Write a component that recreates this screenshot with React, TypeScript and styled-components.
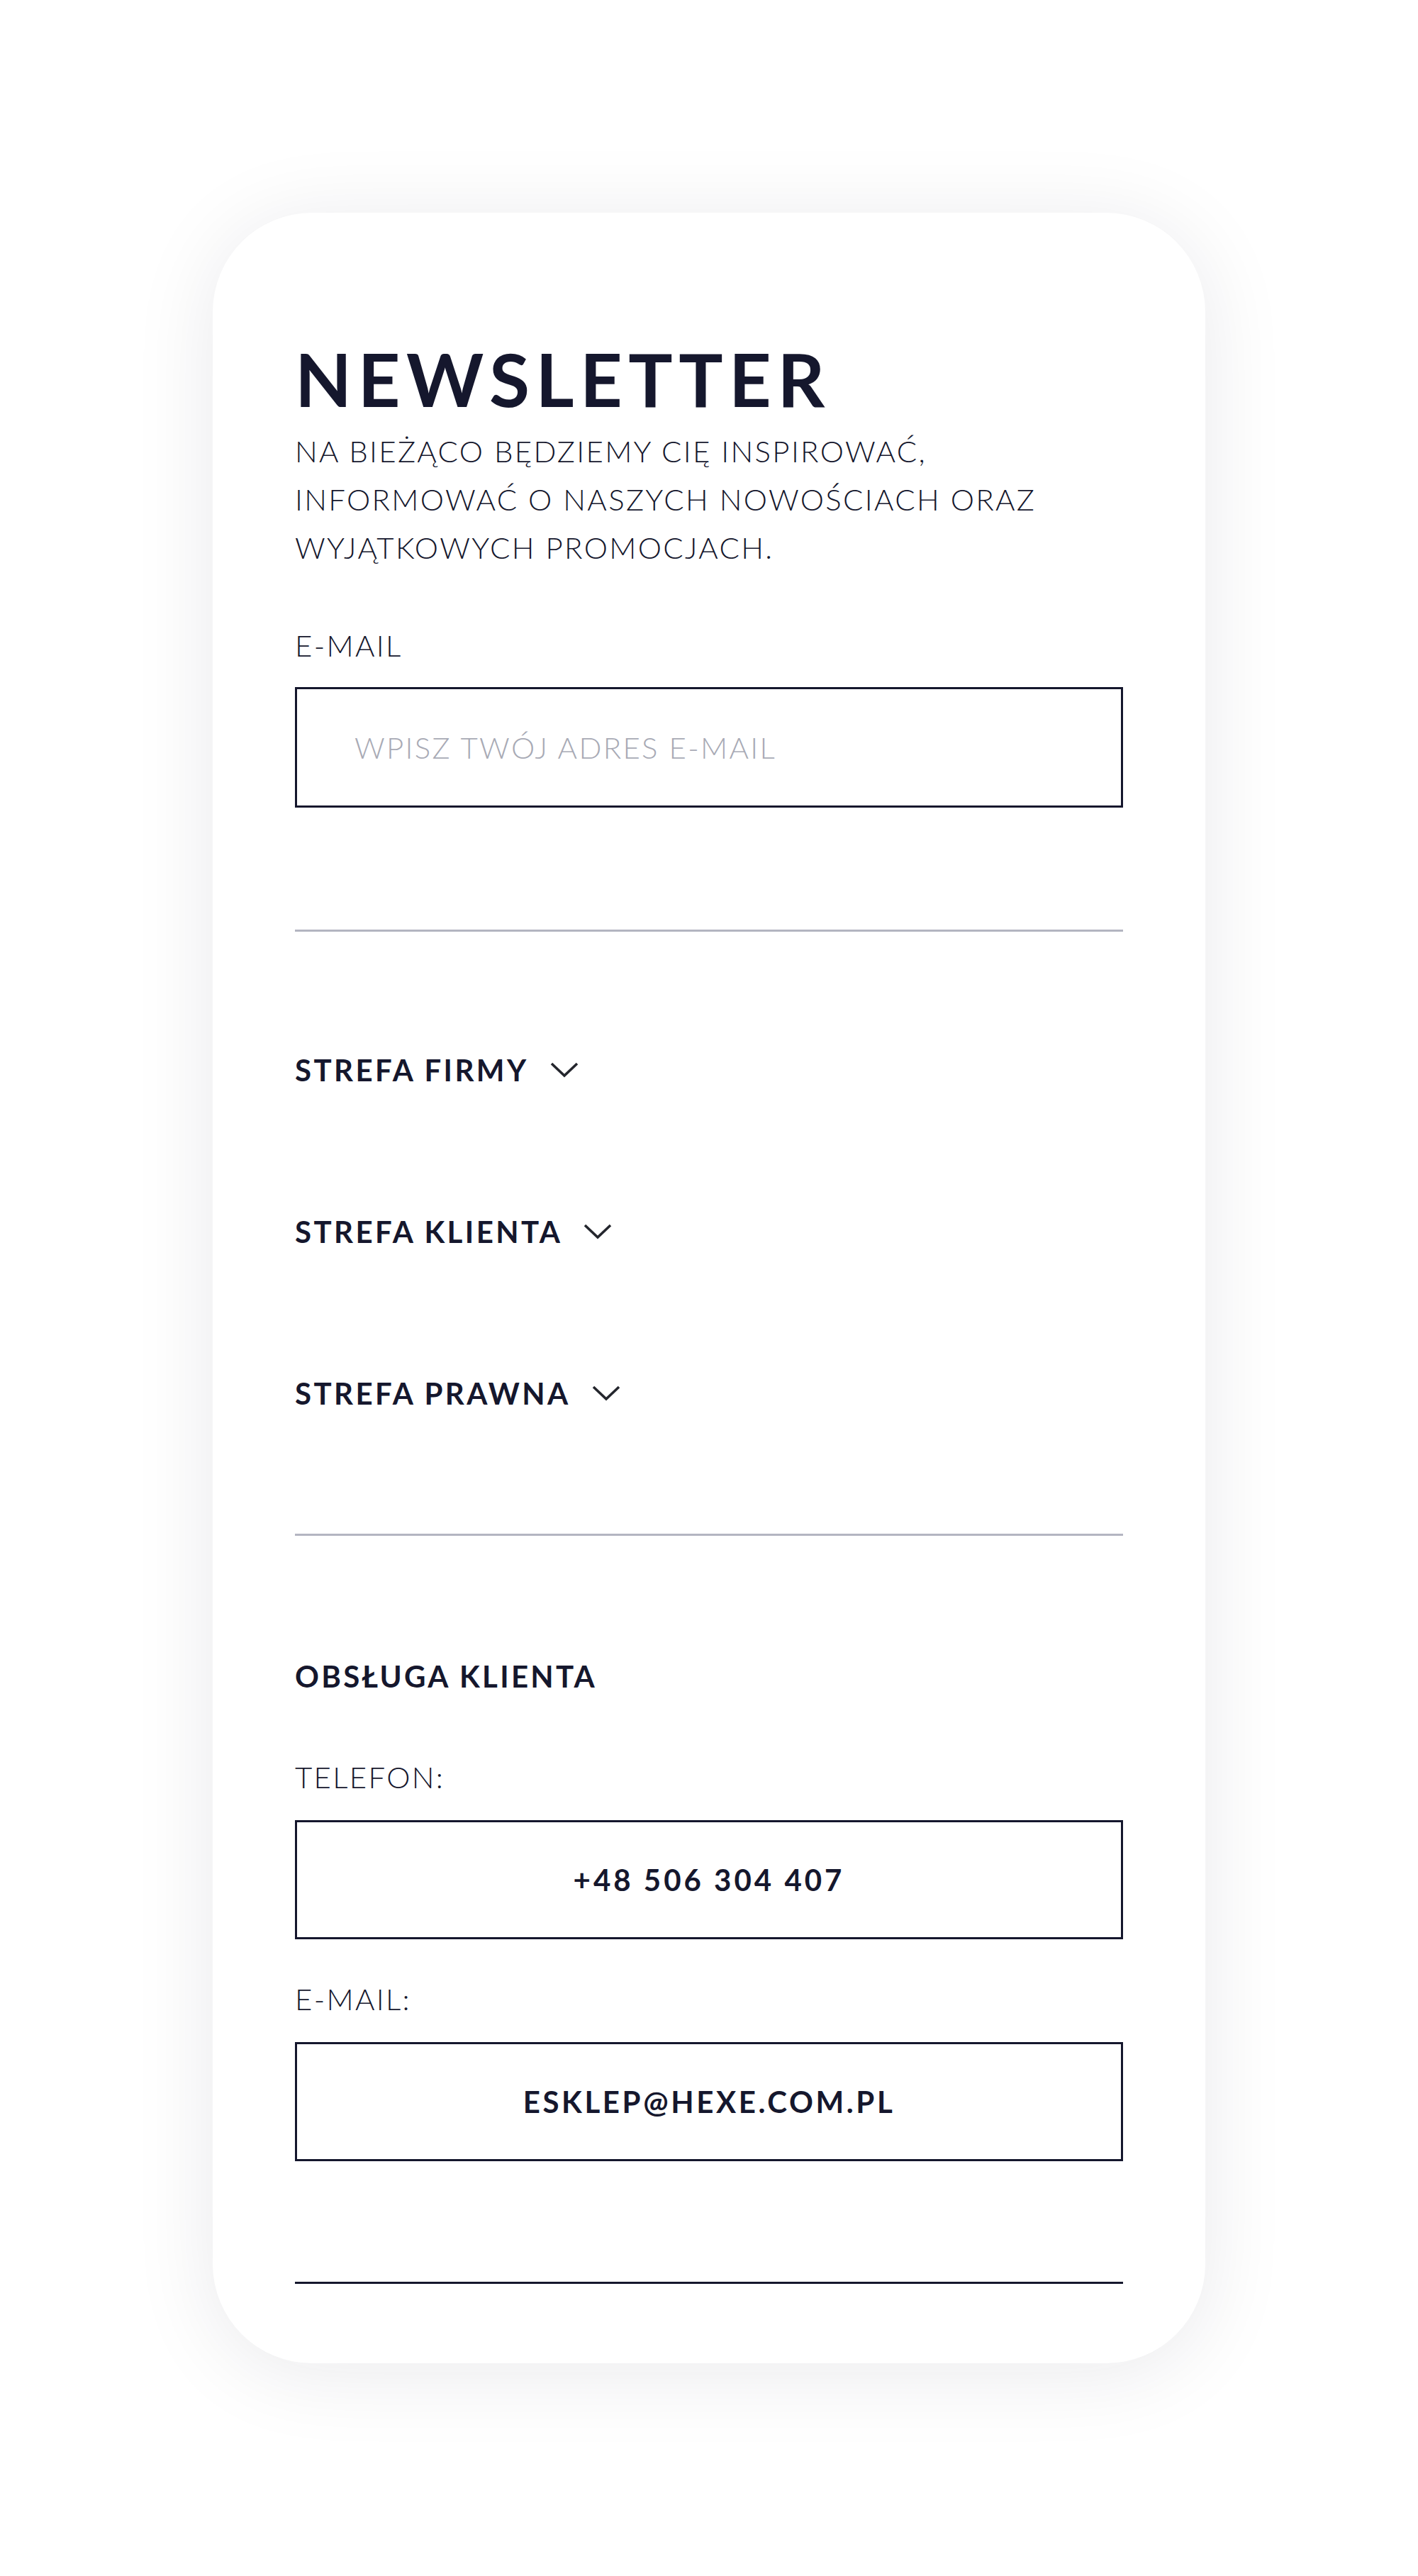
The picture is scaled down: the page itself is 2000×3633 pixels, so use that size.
import React from 'react';
import styled, { createGlobalStyle } from 'styled-components';

const ink = '#15172d';
const font = 'Lato, "Noto Sans", Arial, sans-serif';

const GlobalStyle = createGlobalStyle`
  html, body {
    margin: 0;
    padding: 0;
    background: #ffffff;
  }
  body {
    font-family: ${font};
    color: ${ink};
  }
  * {
    box-sizing: border-box;
  }
`;

const Page = styled.div`
  min-height: 3633px;
  padding-top: 300px;
  display: flex;
  flex-direction: column;
  align-items: center;
`;

const Card = styled.footer`
  width: 1400px;
  padding: 182px 116px 112px;
  background: #ffffff;
  border-radius: 140px;
  box-shadow: 0 12px 120px rgba(20, 22, 45, 0.09);
  display: flex;
  flex-direction: column;
`;

const Heading = styled.h2`
  margin: 0;
  font-size: 104px;
  line-height: 104px;
  font-weight: 700;
  letter-spacing: 8.5px;
`;

const Lead = styled.p`
  margin: 16px 0 0;
  max-width: 1110px;
  font-size: 42px;
  line-height: 68px;
  font-weight: 300;
  letter-spacing: 2.3px;
`;

const FieldLabel = styled.label<{ $gap: number }>`
  display: block;
  margin-top: ${(p) => p.$gap}px;
  font-size: 42px;
  line-height: 60px;
  font-weight: 300;
  letter-spacing: 2.3px;
`;

const EmailInput = styled.input`
  display: block;
  margin-top: 29px;
  width: 100%;
  height: 170px;
  padding: 0 0 0 81px;
  border: 3px solid ${ink};
  border-radius: 0;
  background: #ffffff;
  font-family: ${font};
  font-size: 42px;
  font-weight: 300;
  letter-spacing: 2.3px;
  color: ${ink};
  outline: none;
  &::placeholder {
    color: #a8aab5;
  }
`;

const Rule = styled.hr<{ $gap: number; $dark?: boolean }>`
  margin: ${(p) => p.$gap}px 0 0;
  border: 0;
  height: 3px;
  background: ${(p) => (p.$dark ? ink : '#b3b5c1')};
`;

const NavList = styled.ul`
  list-style: none;
  margin: 165px 0 0;
  padding: 0;
  display: flex;
  flex-direction: column;
  gap: 168px;
`;

const NavToggle = styled.button`
  display: flex;
  align-items: center;
  gap: 30px;
  padding: 0;
  border: 0;
  background: none;
  font-family: ${font};
  font-size: 42px;
  line-height: 60px;
  font-weight: 700;
  letter-spacing: 3.4px;
  color: ${ink};
  cursor: pointer;
`;

const Chevron = styled.svg`
  width: 40px;
  height: 22px;
  flex: none;
`;

const SectionTitle = styled.h3`
  margin: 168px 0 0;
  font-size: 42px;
  line-height: 60px;
  font-weight: 700;
  letter-spacing: 3.3px;
`;

const ContactBox = styled.a<{ $spacing: number }>`
  display: flex;
  align-items: center;
  justify-content: center;
  margin-top: 31px;
  height: 168px;
  border: 3px solid ${ink};
  font-size: 42px;
  font-weight: 700;
  letter-spacing: ${(p) => p.$spacing}px;
  color: ${ink};
  text-decoration: none;
`;

const zones = ['STREFA FIRMY', 'STREFA KLIENTA', 'STREFA PRAWNA'];

const App: React.FC = () => (
  <>
    <GlobalStyle />
    <Page>
      <Card>
        <Heading>NEWSLETTER</Heading>
        <Lead>
          NA BIEŻĄCO BĘDZIEMY CIĘ INSPIROWAĆ, INFORMOWAĆ O NASZYCH NOWOŚCIACH
          ORAZ WYJĄTKOWYCH PROMOCJACH.
        </Lead>
        <FieldLabel $gap={74} htmlFor="newsletter-email">
          E-MAIL
        </FieldLabel>
        <EmailInput
          id="newsletter-email"
          type="email"
          placeholder="WPISZ TWÓJ ADRES E-MAIL"
        />
        <Rule $gap={172} />
        <NavList>
          {zones.map((zone) => (
            <li key={zone}>
              <NavToggle type="button">
                {zone}
                <Chevron viewBox="0 0 40 22" fill="none">
                  <polyline
                    points="2,2 20,19 38,2"
                    stroke="#24262d"
                    strokeWidth="3.6"
                  />
                </Chevron>
              </NavToggle>
            </li>
          ))}
        </NavList>
        <Rule $gap={168} />
        <SectionTitle>OBSŁUGA KLIENTA</SectionTitle>
        <FieldLabel $gap={82}>TELEFON:</FieldLabel>
        <ContactBox $spacing={4} href="tel:+48506304407">
          +48 506 304 407
        </ContactBox>
        <FieldLabel $gap={54}>E-MAIL:</FieldLabel>
        <ContactBox $spacing={3.6} href="mailto:esklep@hexe.com.pl">
          ESKLEP@HEXE.COM.PL
        </ContactBox>
        <Rule $gap={170} $dark />
      </Card>
    </Page>
  </>
);

export default App;
